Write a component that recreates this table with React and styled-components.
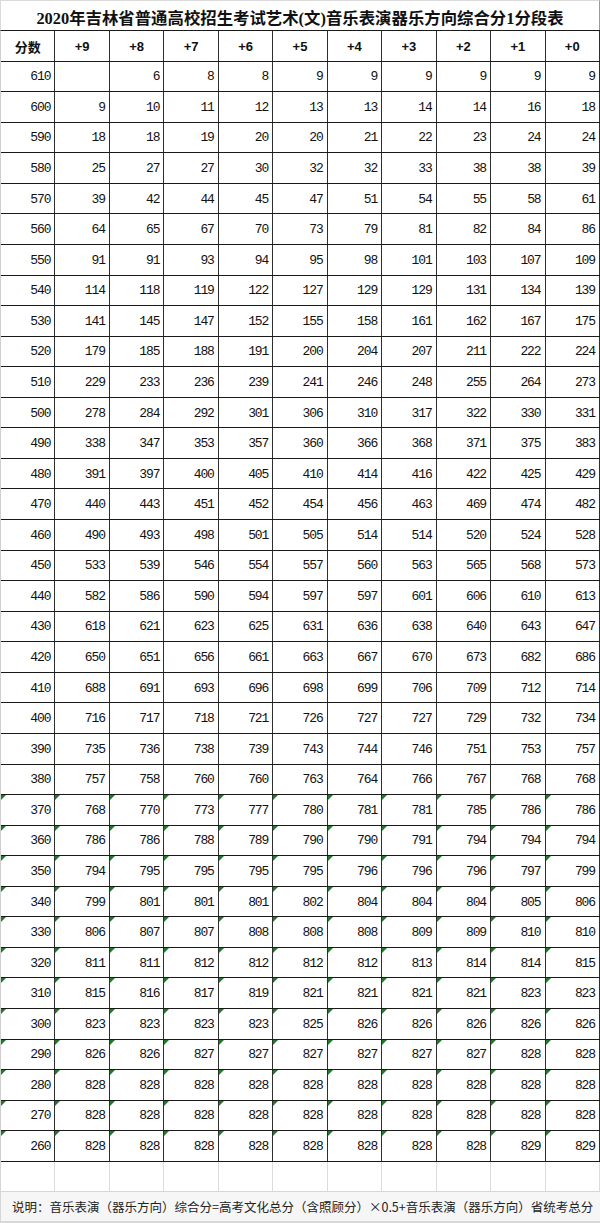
import React from "react";
import styled, { createGlobalStyle } from "styled-components";

const GlobalStyle = createGlobalStyle`
  html, body { margin: 0; padding: 0; background: #ffffff; }
  * { box-sizing: border-box; }
`;

const Page = styled.div`
  width: 600px;
  height: 1223px;
  display: flex;
  flex-direction: column;
  background: #ffffff;
  overflow: hidden;
`;

const Title = styled.h1`
  margin: 0;
  height: 30px;
  flex: none;
  display: flex;
  align-items: center;
  justify-content: center;
  border-top: 1px solid #dadada;
  border-left: 1px solid #dadada;
  border-right: 1px solid #9a9a9a;
  font-family: "Liberation Serif", "Noto Sans CJK SC", serif;
  font-weight: 700;
  font-size: 16.4px;
  color: #111;
  padding-top: 2px;
`;

const Table = styled.div`
  height: 1132px;
  flex: none;
  display: flex;
  flex-direction: column;
  border-top: 1px solid #1a1a1a;
  border-left: 1px solid #cfcfcf;
  width: 600px;
`;

const Row = styled.div`
  flex: 1;
  display: grid;
  grid-template-columns: repeat(11, 1fr);
  border-bottom: 1px solid #1a1a1a;
`;

const Cell = styled.div`
  position: relative;
  display: flex;
  align-items: center;
  justify-content: ${(p) => (p.$head ? "center" : "flex-end")};
  padding-right: ${(p) => (p.$head ? "0" : "4px")};
  padding-top: 1px;
  border-right: 1px solid #2e2e2e;
  font-family: ${(p) =>
    p.$head
      ? `"Liberation Sans", "Noto Sans CJK SC", sans-serif`
      : `"Liberation Mono", monospace`};
  font-weight: ${(p) => (p.$head ? 700 : 400)};
  font-size: ${(p) => (p.$head ? "13px" : "13px")};
  letter-spacing: ${(p) => (p.$head ? "0" : "-1.1px")};
  color: #111;

  &::before {
    content: "";
    display: ${(p) => (p.$flag ? "block" : "none")};
    position: absolute;
    top: 0;
    left: 0;
    width: 0;
    height: 0;
    border-top: 5px solid #1f7a2a;
    border-right: 5px solid transparent;
  }
`;

const BlankRow = styled.div`
  height: 30px;
  flex: none;
  display: grid;
  grid-template-columns: repeat(11, 1fr);
  border-left: 1px solid #d6d6d6;
  border-bottom: 1px solid #d6d6d6;
`;

const BlankCell = styled.div`
  border-right: 1px solid #dcdcdc;
`;

const Note = styled.div`
  flex: 1;
  display: flex;
  align-items: center;
  padding-left: 11px;
  background: #f6f6f6;
  border-left: 1px solid #d6d6d6;
  border-bottom: 2px solid #d8d8d8;
  font-family: "Noto Sans CJK SC", sans-serif;
  font-size: 12.5px;
  color: #222;
  white-space: nowrap;
`;

const headers = ["分数", "+9", "+8", "+7", "+6", "+5", "+4", "+3", "+2", "+1", "+0"];

const raw = `610,,6,8,8,9,9,9,9,9,9
600,9,10,11,12,13,13,14,14,16,18
590,18,18,19,20,20,21,22,23,24,24
580,25,27,27,30,32,32,33,38,38,39
570,39,42,44,45,47,51,54,55,58,61
560,64,65,67,70,73,79,81,82,84,86
550,91,91,93,94,95,98,101,103,107,109
540,114,118,119,122,127,129,129,131,134,139
530,141,145,147,152,155,158,161,162,167,175
520,179,185,188,191,200,204,207,211,222,224
510,229,233,236,239,241,246,248,255,264,273
500,278,284,292,301,306,310,317,322,330,331
490,338,347,353,357,360,366,368,371,375,383
480,391,397,400,405,410,414,416,422,425,429
470,440,443,451,452,454,456,463,469,474,482
460,490,493,498,501,505,514,514,520,524,528
450,533,539,546,554,557,560,563,565,568,573
440,582,586,590,594,597,597,601,606,610,613
430,618,621,623,625,631,636,638,640,643,647
420,650,651,656,661,663,667,670,673,682,686
410,688,691,693,696,698,699,706,709,712,714
400,716,717,718,721,726,727,727,729,732,734
390,735,736,738,739,743,744,746,751,753,757
380,757,758,760,760,763,764,766,767,768,768
370,768,770,773,777,780,781,781,785,786,786
360,786,786,788,789,790,790,791,794,794,794
350,794,795,795,795,795,796,796,796,797,799
340,799,801,801,801,802,804,804,804,805,806
330,806,807,807,808,808,808,809,809,810,810
320,811,811,812,812,812,812,813,814,814,815
310,815,816,817,819,821,821,821,821,823,823
300,823,823,823,823,825,826,826,826,826,826
290,826,826,827,827,827,827,827,827,828,828
280,828,828,828,828,828,828,828,828,828,828
270,828,828,828,828,828,828,828,828,828,828
260,828,828,828,828,828,828,828,828,829,829`;

const rows = raw.split("\n").map((line) => line.split(","));

export default function App() {
  return (
    <>
      <GlobalStyle />
      <Page>
        <Title>2020年吉林省普通高校招生考试艺术(文)音乐表演器乐方向综合分1分段表</Title>
        <Table>
          <Row>
            {headers.map((h) => (
              <Cell key={h} $head>
                {h}
              </Cell>
            ))}
          </Row>
          {rows.map((r) => {
            const flagged = Number(r[0]) <= 370;
            return (
              <Row key={r[0]}>
                {r.map((v, i) => (
                  <Cell key={i} $flag={flagged}>
                    {v}
                  </Cell>
                ))}
              </Row>
            );
          })}
        </Table>
        <BlankRow>
          {headers.map((h) => (
            <BlankCell key={h} />
          ))}
        </BlankRow>
        <Note>说明：音乐表演（器乐方向）综合分=高考文化总分（含照顾分）×0.5+音乐表演（器乐方向）省统考总分</Note>
      </Page>
    </>
  );
}
